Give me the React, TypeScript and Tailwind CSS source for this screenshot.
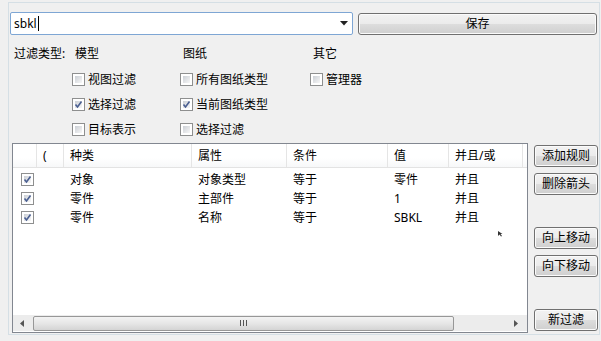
import React from "react";

const font = "font-['Noto_Sans','Noto_Sans_CJK_SC',sans-serif]";

function Check({ checked = false }: { checked?: boolean }) {
  return (
    <div className="relative w-[13px] h-[13px] shrink-0 border border-[#8e8f8f] bg-white p-[2px]">
      <div className="w-full h-full bg-[linear-gradient(135deg,#cbcfd5,#f7f7f7)]" />
      {checked && (
        <svg className="absolute left-[1px] top-[1px]" width="9" height="9" viewBox="0 0 9 9">
          <path d="M1.5 4.5 L3.5 7 L7.5 1.5" fill="none" stroke="#4a5f91" strokeWidth="1.6" />
        </svg>
      )}
    </div>
  );
}

function Btn({ children, cls }: { children: React.ReactNode; cls: string }) {
  return (
    <div
      className={
        "flex items-center justify-center rounded-[3px] border border-[#707070] bg-[linear-gradient(#f2f2f2_0%,#ebebeb_50%,#dddddd_51%,#cfcfcf_100%)] shadow-[inset_0_0_0_1px_#fbfbfb] text-[12px] text-black " +
        cls
      }
    >
      {children}
    </div>
  );
}

const widths = ["w-[24px]", "w-[27px]", "w-[128px]", "w-[95px]", "w-[101px]", "w-[61px]", "w-[74px]"];

const rows = [
  ["对象", "对象类型", "等于", "零件", "并且"],
  ["零件", "主部件", "等于", "1", "并且"],
  ["零件", "名称", "等于", "SBKL", "并且"],
];

export default function App() {
  return (
    <div className={"w-[601px] h-[341px] bg-[#f0f0f0] pt-[2px] pl-[8px] pr-[1px] text-[12px] text-black " + font}>
      <div className="h-[333px] border border-[#d5dfe5] pl-[1px] relative">
        {/* top row */}
        <div className="flex mt-[9px]">
          <div className="relative w-[343px] h-[23px] rounded-[2px] border border-[#7ea6d4] bg-white flex items-center pl-[3px]">
            <span className="leading-[16px] text-[12px]">sbkl</span>
            <span className="w-[1px] h-[15px] bg-black ml-[1px]" />
            <div className="flex-1" />
            <svg className="mr-[4px]" width="8" height="5" viewBox="0 0 8 5">
              <path d="M0 0 H8 L4 4.5 Z" fill="#222" />
            </svg>
          </div>
          <Btn cls="ml-[5px] mt-[1px] w-[239px] h-[22px]">保存</Btn>
        </div>

        {/* filter section */}
        <div className="pl-[4px] mt-[11px] flex leading-[16px]">
          <span className="w-[61px]">过滤类型:</span>
          <span className="w-[108px]">模型</span>
          <span className="w-[130px]">图纸</span>
          <span>其它</span>
        </div>
        <div className="ml-[62px] mt-[5px] grid grid-cols-[108px_130px_auto]">
          <div className="flex items-center h-[25px] gap-[3px]"><Check /><span>视图过滤</span></div>
          <div className="flex items-center h-[25px] gap-[3px]"><Check /><span>所有图纸类型</span></div>
          <div className="flex items-center h-[25px] gap-[3px]"><Check /><span>管理器</span></div>
          <div className="flex items-center h-[25px] gap-[3px]"><Check checked /><span>选择过滤</span></div>
          <div className="flex items-center h-[25px] gap-[3px]"><Check checked /><span>当前图纸类型</span></div>
          <div />
          <div className="flex items-center h-[25px] gap-[3px]"><Check /><span>目标表示</span></div>
          <div className="flex items-center h-[25px] gap-[3px]"><Check /><span>选择过滤</span></div>
          <div />
        </div>

        {/* table + buttons */}
        <div className="flex mt-[1px]">
          <div className="ml-[2px] w-[516px] h-[190px] border border-[#828790] bg-white flex flex-col">
            <div className="flex h-[24px] border-b border-[#e3e3e3] bg-[linear-gradient(#ffffff_60%,#f7f8f9)]">
              {["", "(", "种类", "属性", "条件", "值", "并且/或"].map((h, i) => (
                <div key={i} className={widths[i] + " border-r border-[#e5e5e5] pl-[6px] pt-[4px] leading-[16px]"}>
                  {h}
                </div>
              ))}
            </div>
            <div className="mt-[2px]">
              {rows.map((r, ri) => (
                <div key={ri} className="flex h-[19px] items-center leading-[16px]">
                  <div className={widths[0] + " pl-[8px]"}><Check checked /></div>
                  <div className={widths[1]} />
                  {r.map((c, ci) => (
                    <div key={ci} className={widths[ci + 2] + " pl-[6px]"}>{c}</div>
                  ))}
                </div>
              ))}
            </div>
            <div className="flex-1" />
            <div className="flex h-[16px] mb-[1px] bg-[#ececec] items-center">
              <div className="w-[17px] h-full flex items-center justify-center">
                <svg width="4" height="7" viewBox="0 0 4 7"><path d="M4 0 V7 L0 3.5 Z" fill="#555" /></svg>
              </div>
              <div className="ml-[3px] w-[421px] h-[15px] rounded-[2px] border border-[#979797] bg-[linear-gradient(#f3f3f3,#e6e6e6_50%,#d4d4d4)] flex items-center justify-center">
                <div className="flex gap-[2px]">
                  <div className="w-[1px] h-[6px] bg-[#555]" />
                  <div className="w-[1px] h-[6px] bg-[#555]" />
                  <div className="w-[1px] h-[6px] bg-[#555]" />
                </div>
              </div>
              <div className="flex-1" />
              <div className="w-[17px] h-full flex items-center justify-center mr-[3px]">
                <svg width="4" height="7" viewBox="0 0 4 7"><path d="M0 0 V7 L4 3.5 Z" fill="#555" /></svg>
              </div>
            </div>
          </div>
          <div className="ml-[6px] w-[64px] flex flex-col pt-[2px]">
            <Btn cls="h-[22px]">添加规则</Btn>
            <Btn cls="h-[22px] mt-[6px]">删除箭头</Btn>
            <Btn cls="h-[22px] mt-[32px]">向上移动</Btn>
            <Btn cls="h-[22px] mt-[6px]">向下移动</Btn>
            <Btn cls="h-[22px] mt-[32px]">新过滤</Btn>
          </div>
        </div>
        <svg className="absolute left-[489px] top-[228px]" width="5" height="6" viewBox="0 0 5 6">
          <path d="M0 0 L0 5 L1.5 3.5 L3 5.5 L4 5 L2.5 3 L4.5 3 Z" fill="#333" />
        </svg>
      </div>
    </div>
  );
}
